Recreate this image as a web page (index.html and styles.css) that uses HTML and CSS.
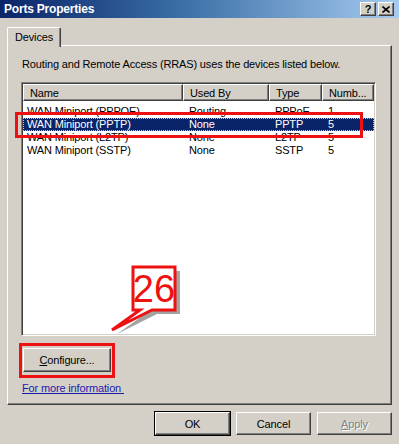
FILE: index.html
```html
<!DOCTYPE html>
<html lang="en">
<head>
    <meta charset="UTF-8">
    <title>Ports Properties</title>
    <link rel="stylesheet" href="styles.css">
</head>
<body>
    <div class="dialog">
        <div class="titlebar">
            <span class="title">Ports Properties</span>
            <div class="caption-btns">
                <div class="cap-btn help">?</div>
                <div class="cap-btn">
                    <svg width="8" height="7" viewBox="0 0 8 7"><path d="M0.5 0.5 L7.5 6.5 M7.5 0.5 L0.5 6.5" stroke="#000" stroke-width="1.6"/></svg>
                </div>
            </div>
        </div>

        <div class="content">
            <div class="tabs">
                <div class="tab">Devices</div>
            </div>

            <div class="panel">
                <p class="desc">Routing and Remote Access (RRAS) uses the devices listed below.</p>

                <div class="listview">
                    <div class="lv-header">
                        <div class="hcell c-name">Name</div>
                        <div class="hcell c-used">Used By</div>
                        <div class="hcell c-type">Type</div>
                        <div class="hcell c-num">Numb...</div>
                    </div>
                    <div class="lv-body">
                        <div class="row">
                            <div class="cell c-name">WAN Miniport (PPPOE)</div>
                            <div class="cell c-used">Routing</div>
                            <div class="cell c-type">PPPoE</div>
                            <div class="cell c-num">1</div>
                        </div>
                        <div class="row selected">
                            <div class="cell c-name">WAN Miniport (PPTP)</div>
                            <div class="cell c-used">None</div>
                            <div class="cell c-type">PPTP</div>
                            <div class="cell c-num">5</div>
                        </div>
                        <div class="row">
                            <div class="cell c-name">WAN Miniport (L2TP)</div>
                            <div class="cell c-used">None</div>
                            <div class="cell c-type">L2TP</div>
                            <div class="cell c-num">5</div>
                        </div>
                        <div class="row">
                            <div class="cell c-name">WAN Miniport (SSTP)</div>
                            <div class="cell c-used">None</div>
                            <div class="cell c-type">SSTP</div>
                            <div class="cell c-num">5</div>
                        </div>
                    </div>
                </div>

                <div class="btn configure"><u>C</u>onfigure...</div>
                <a class="more" href="#">For more information&nbsp;</a>
            </div>

            <div class="footer">
                <div class="btn default">OK</div>
                <div class="btn">Cancel</div>
                <div class="btn disabled"><u>A</u>pply</div>
            </div>
        </div>

        <!-- red annotation marks -->
        <div class="mark mark-row"></div>
        <div class="mark mark-cfg"></div>
        <svg class="callout" width="80" height="75" viewBox="0 0 80 75">
            <path d="M28 5 H70 V48 H47 L7 68 L35 48 H28 Z" fill="#a3a3a3" transform="translate(5 4)"/>
            <path d="M28 5 H70 V48 H47 L7 68 L35 48 H28 Z" fill="#fff" stroke="#ee1111" stroke-width="3" stroke-linejoin="miter"/>
            <text x="49" y="40" text-anchor="middle" class="callout-num">26</text>
        </svg>
    </div>
</body>
</html>
```

FILE: styles.css
```css
* {
    margin: 0;
    padding: 0;
    box-sizing: border-box;
}

body {
    background: #d4d0c8;
}

.dialog {
    position: relative;
    width: 399px;
    height: 444px;
    overflow: hidden;
    background: #d4d0c8;
    font-family: 'Liberation Sans', Arial, sans-serif;
    font-size: 11px;
    letter-spacing: -0.15px;
    color: #000;
}

.titlebar {
    height: 18px;
    display: flex;
    align-items: center;
    justify-content: space-between;
    padding: 0 5px 0 4px;
    background: linear-gradient(to right, #0a246a 0%, #3a6ea5 45%, #a6caf0 100%);
}

.title {
    color: #fff;
    font-weight: bold;
    font-size: 12px;
    letter-spacing: -0.2px;
}

.caption-btns {
    display: flex;
    gap: 2px;
}

.cap-btn {
    width: 16px;
    height: 14px;
    display: flex;
    align-items: center;
    justify-content: center;
    background: #d4d0c8;
    border-top: 1px solid #fff;
    border-left: 1px solid #fff;
    border-right: 1px solid #404040;
    border-bottom: 1px solid #404040;
    box-shadow: inset -1px -1px #808080;
}

.cap-btn.help {
    font-weight: bold;
    font-size: 11px;
}

.content {
    padding: 9px 7px 0 7px;
}

.tabs {
    display: flex;
    height: 19px;
    position: relative;
    z-index: 1;
    margin-bottom: -1px;
}

.tab {
    width: 54px;
    height: 20px;
    padding: 3px 0 0 7px;
    background: #d4d0c8;
    border-top: 1px solid #fff;
    border-left: 1px solid #fff;
    border-right: 1px solid #404040;
    box-shadow: inset -1px 0 #808080;
    border-radius: 2px 2px 0 0;
}

.panel {
    height: 360px;
    padding: 12px 0 0 13px;
    border-top: 1px solid #fff;
    border-left: 1px solid #fff;
    border-right: 1px solid #404040;
    border-bottom: 1px solid #404040;
    box-shadow: inset -1px -1px #808080;
}

.desc {
    line-height: 13px;
    margin-left: 1px;
}

.listview {
    margin-top: 11px;
    width: 355px;
    height: 254px;
    background: #fff;
    border-top: 1px solid #808080;
    border-left: 1px solid #808080;
    border-right: 1px solid #fff;
    border-bottom: 1px solid #fff;
    box-shadow: inset 1px 1px #404040, inset -1px -1px #d4d0c8;
    padding: 1px;
}

.lv-header {
    display: flex;
    height: 17px;
}

.hcell {
    background: #d4d0c8;
    border-top: 1px solid #fff;
    border-left: 1px solid #fff;
    border-right: 1px solid #404040;
    border-bottom: 1px solid #404040;
    box-shadow: inset -1px -1px #808080;
    padding: 2px 0 0 6px;
    line-height: 12px;
}

.c-name { width: 160px; }
.c-used { width: 86px; }
.c-type { width: 53px; }
.c-num  { width: 52px; }

.lv-body {
    padding-top: 4px;
}

.row {
    display: flex;
    height: 13px;
    line-height: 13px;
    width: 351px;
}

.cell {
    padding-left: 6px;
    white-space: nowrap;
}

.cell.c-name {
    padding-left: 4px;
}

.row.selected {
    background: #0a246a;
    color: #fff;
    outline: 1px dotted #a6caf0;
    outline-offset: -1px;
}

.btn {
    width: 75px;
    height: 23px;
    display: flex;
    align-items: center;
    justify-content: center;
    background: #d4d0c8;
    border-top: 1px solid #fff;
    border-left: 1px solid #fff;
    border-right: 1px solid #404040;
    border-bottom: 1px solid #404040;
    box-shadow: inset -1px -1px #808080;
}

.btn.configure {
    width: 88px;
    height: 24px;
    margin: 12px 0 0 2px;
}

.btn.default {
    outline: 1px solid #000;
    outline-offset: 0;
}

.btn.disabled {
    color: #808080;
    text-shadow: 1px 1px #fff;
}

.more {
    display: inline-block;
    margin: 10px 0 0 1px;
    color: #1c1ca8;
    text-decoration: underline;
    line-height: 13px;
}

.footer {
    display: flex;
    justify-content: flex-end;
    gap: 6px;
    margin-top: 7px;
}

.mark {
    position: absolute;
    border: 3px solid #ee1111;
}

.mark-row {
    left: 15px;
    top: 112px;
    width: 348px;
    height: 26px;
}

.mark-cfg {
    left: 19px;
    top: 343px;
    width: 96px;
    height: 35px;
}

.callout {
    position: absolute;
    left: 105px;
    top: 262px;
}

.callout-num {
    font-family: 'Liberation Sans', Arial, sans-serif;
    font-size: 38px;
    letter-spacing: 0;
    fill: #ee1111;
}
```
